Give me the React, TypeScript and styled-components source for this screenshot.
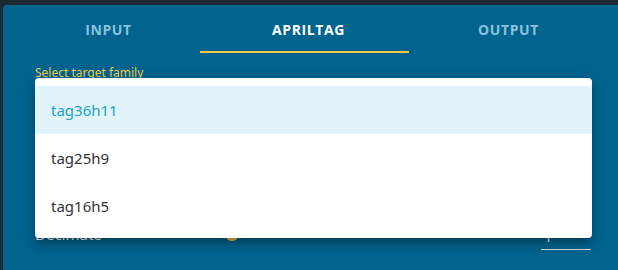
import React from 'react';
import styled, { createGlobalStyle } from 'styled-components';

const Global = createGlobalStyle`
  html, body {
    margin: 0;
    padding: 0;
    background: #1e2a32;
    font-family: "Noto Sans", "Open Sans", sans-serif;
  }
  * { box-sizing: border-box; }
`;

const Panel = styled.div`
  position: relative;
  margin: 5px 0 0 3px;
  height: 265px;
  background: #00648f;
  border-radius: 4px 0 0 0;
  overflow: hidden;
`;

const Tabs = styled.ul`
  display: grid;
  grid-template-columns: repeat(3, 200px);
  margin: 0;
  padding: 0 0 0 5px;
  list-style: none;
  height: 48px;
`;

const Tab = styled.li<{ $active?: boolean }>`
  position: relative;
  display: flex;
  align-items: center;
  justify-content: center;
  padding-left: 1px;
  font-family: "Open Sans", "Noto Sans", sans-serif;
  font-size: 14px;
  font-weight: 700;
  letter-spacing: 0.6px;
  color: ${(p) => (p.$active ? '#ffffff' : '#8cc2dc')};
  &::after {
    content: '';
    display: ${(p) => (p.$active ? 'block' : 'none')};
    position: absolute;
    left: -8px;
    right: -1px;
    bottom: 0;
    height: 2px;
    background: #f4c840;
  }
`;

const Form = styled.div`
  padding: 13px 27px 0 32px;
`;

const Label = styled.div`
  font-size: 12px;
  line-height: 14px;
  color: #efc94a;
`;

const Field = styled.div`
  height: 32px;
  border-bottom: 1px solid rgba(255, 255, 255, 0.7);
`;

const Row = styled.div`
  display: flex;
  align-items: center;
  margin-top: 107px;
  height: 30px;
  color: #ffffff;
  font-size: 15px;
`;

const RowLabel = styled.span`
  width: 160px;
`;

const Slider = styled.div`
  position: relative;
  flex: 1;
  height: 2px;
  margin: 0 30px 0 30px;
  background: rgba(255, 255, 255, 0.3);
  &::before {
    content: '';
    position: absolute;
    left: 0;
    top: -6px;
    width: 14px;
    height: 14px;
    border-radius: 50%;
    background: #f4c840;
  }
`;

const NumberInput = styled.div`
  width: 50px;
  height: 26px;
  margin-top: 6px;
  padding-left: 3px;
  border-bottom: 1px solid rgba(255, 255, 255, 0.8);
  font-size: 14px;
  line-height: 26px;
`;

const Menu = styled.ul`
  position: absolute;
  left: 32px;
  top: 73px;
  width: 557px;
  margin: 0;
  padding: 8px 0;
  list-style: none;
  background: #ffffff;
  border-radius: 4px;
  box-shadow: 0 5px 5px -3px rgba(0, 0, 0, 0.2), 0 8px 10px 1px rgba(0, 0, 0, 0.14),
    0 3px 14px 2px rgba(0, 0, 0, 0.12);
`;

const Option = styled.li<{ $selected?: boolean }>`
  display: flex;
  align-items: center;
  height: 48px;
  padding: 0 16px;
  font-size: 15px;
  color: ${(p) => (p.$selected ? '#1a9fcb' : '#333333')};
  background: ${(p) => (p.$selected ? '#e0f4fa' : 'transparent')};
`;

const families = ['tag36h11', 'tag25h9', 'tag16h5'];

export default function App() {
  return (
    <>
      <Global />
      <Panel>
        <Tabs>
          <Tab>INPUT</Tab>
          <Tab $active>APRILTAG</Tab>
          <Tab>OUTPUT</Tab>
        </Tabs>
        <Form>
          <Label>Select target family</Label>
          <Field />
          <Row>
            <RowLabel>Decimate</RowLabel>
            <Slider />
            <NumberInput>1</NumberInput>
          </Row>
        </Form>
        <Menu>
          {families.map((f, i) => (
            <Option key={f} $selected={i === 0}>
              {f}
            </Option>
          ))}
        </Menu>
      </Panel>
    </>
  );
}
